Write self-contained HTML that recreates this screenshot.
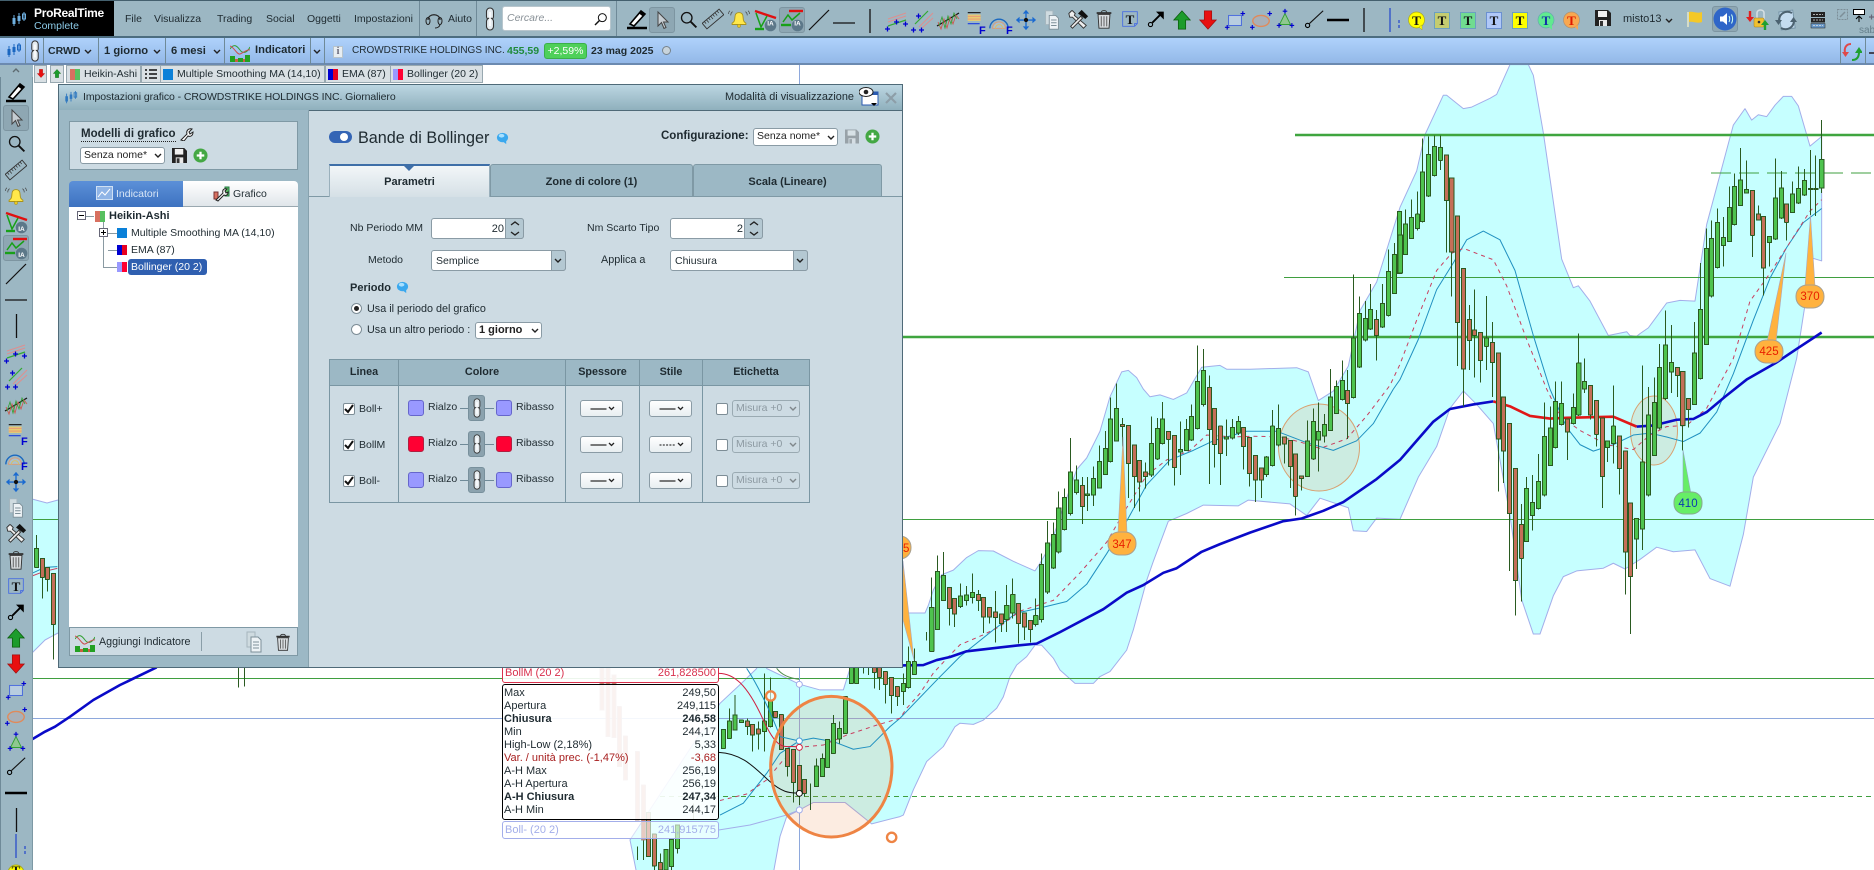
<!DOCTYPE html>
<html lang="it"><head><meta charset="utf-8"><title>ProRealTime</title>
<style>
html,body{margin:0;padding:0;width:1874px;height:870px;overflow:hidden;background:#fff}
body{position:relative;font-family:"Liberation Sans",sans-serif;font-size:10.5px;color:#222}
div,svg{position:absolute}
.t{position:absolute;white-space:nowrap;line-height:14px;font-size:10.5px;color:#1e2a30}
.b{font-weight:bold}
.c{text-align:center}
.sel{background:#fff;border:1px solid #8a9ba5;border-radius:3px;box-sizing:border-box;line-height:15px;white-space:nowrap;padding-left:3px;font-size:10.5px}
.sw{width:16px;height:16px;box-sizing:border-box;border-radius:3px;border:1px solid #6666cc;background:#9999ff}
.sr{border-color:#b02040;background:#ff0033}
.cb{width:12px;height:12px;background:#fff;border:1px solid #7d8d96;border-radius:2px;box-sizing:border-box}
.sl{background:linear-gradient(#fff,#e8eef1);border:1px solid #8a9ba5;border-radius:3px;box-sizing:border-box;height:17px}
.tab{background:#d9e0e4;border:1px solid #98a8b0;box-sizing:border-box;height:18px;top:65px}
.lnk{width:17px;height:26px;background:#8ba2ae;border-radius:3px;border:1px solid #78909c;box-sizing:border-box}
svg.ch path,svg.ch polyline{vector-effect:non-scaling-stroke;stroke-linejoin:round}
.k{shape-rendering:crispEdges}
.tip{font-size:11px;line-height:13px}
.dv{width:1px;background:#6f8a98}
</style></head><body>

<svg width="0" height="0" style="left:0;top:0">
<defs>
<symbol id="pen" viewBox="0 0 24 24"><path d="M5 17L16 4l4 3L9 19z" fill="#fff" stroke="#000" stroke-width="1.6"/><path d="M16 4l4 3-2 2.5-4-3z" fill="#000"/><path d="M2 21h20" stroke="#000" stroke-width="2.4"/></symbol>
<symbol id="cur" viewBox="0 0 24 24"><path d="M8 4v14l3.5-3.5 2.5 6 2-1-2.5-5.5H18z" fill="#c6cdd2" stroke="#444"/></symbol>
<symbol id="mag" viewBox="0 0 24 24"><circle cx="10" cy="10" r="6" fill="none" stroke="#111" stroke-width="1.5"/><path d="M14.5 14.5L21 21" stroke="#111" stroke-width="2.2"/></symbol>
<symbol id="rul" viewBox="0 0 24 24"><g transform="rotate(-40 12 12)"><rect x="0" y="8" width="24" height="8" fill="none" stroke="#333"/><path d="M3 8v3M6 8v4M9 8v3M12 8v4M15 8v3M18 8v4M21 8v3" stroke="#333" stroke-width=".8"/></g></symbol>
<symbol id="bel" viewBox="0 0 24 24"><path d="M12 5c-4 0-4.5 3-4.5 5.5 0 3-1 5-3 6V18h15v-1.500c-2-1-3-3-3-6C16.500 8 16 5 12 5z" fill="#ffe84a" stroke="#a8921c"/><circle cx="12" cy="19.500" r="1.700" fill="#e8c820" stroke="#a8921c" stroke-width=".6"/><path d="M5 4C3.500 5 3 6.500 3 8M2 3C1 4 .5 5 .5 6.500M19 4c1.500 1 2 2.500 2 4M22 3c1 1 1.500 2 1.500 3.500" stroke="#444" fill="none" stroke-width=".8"/></symbol>
<symbol id="ia1" viewBox="0 0 24 24"><path d="M2 3L23 10" stroke="#e01010" stroke-width="2.400"/><path d="M3 5L8 19L14 8" stroke="#18a018" stroke-width="1.500" fill="none"/><path d="M2 21h9" stroke="#18a018" stroke-width="2.400"/><circle cx="17.500" cy="17.500" r="5.800" fill="#5c7889"/></symbol>
<symbol id="ia2" viewBox="0 0 24 24"><path d="M9 3H23" stroke="#e01010" stroke-width="2.400"/><path d="M3 14L8 7L12 12L20 5" stroke="#18a018" stroke-width="1.500" fill="none"/><path d="M1 17h10" stroke="#18a018" stroke-width="2.400"/><circle cx="17.500" cy="17.500" r="5.800" fill="#5c7889"/></symbol>
<symbol id="lin" viewBox="0 0 24 24"><path d="M2 22L22 2" stroke="#111" stroke-width="1.200"/></symbol>
<symbol id="hln" viewBox="0 0 24 24"><path d="M1 12h22" stroke="#111" stroke-width="1.300"/></symbol>
<symbol id="vln" viewBox="0 0 24 24"><path d="M12 0v24" stroke="#111" stroke-width="1.300"/></symbol>
<symbol id="chA" viewBox="0 0 24 24"><path d="M3 10L21 4M3 13L21 7" stroke="#dd9090" stroke-width="1.100"/><path d="M3 17L21 11" stroke="#33aa33" stroke-width="1.200"/><path d="M0 20h5M2.500 17.500v5M9 13h5M11.500 10.500v5M18 15h5M20.500 12.500v5" stroke="#0000d0" stroke-width="1.300"/></symbol>
<symbol id="chB" viewBox="0 0 24 24"><path d="M9 18L23 4M12 19L23 9" stroke="#dd9090" stroke-width="1.100"/><path d="M5 15L18 2" stroke="#33aa33" stroke-width="1.200"/><path d="M6 7h5M8.500 4.500v5M1 21h5M3.500 18.500v5M9 21h5M11.500 18.500v5" stroke="#0000d0" stroke-width="1.300"/></symbol>
<symbol id="chC" viewBox="0 0 24 24"><path d="M1 18L23 5" stroke="#111" stroke-width="1.300"/><path d="M2 14l3 7 3-10 3 9 3-11 3 7 3-9 3 4" stroke="#cc5a50" fill="none" stroke-width=".9"/><path d="M3 18l3-9 3 11 3-12 3 8 3-11 3 6" stroke="#30a030" fill="none" stroke-width=".8"/></symbol>
<symbol id="fib" viewBox="0 0 24 24"><path d="M3 4h14" stroke="#111" stroke-width="1.200"/><rect x="3" y="6" width="14" height="7" fill="#e8cc70"/><path d="M3 8h14M3 11h14" stroke="#e8907a"/><path d="M3 16h13" stroke="#2244dd" stroke-width="1.300"/></symbol>
<symbol id="arc" viewBox="0 0 24 24"><path d="M2 20a10 10 0 0 1 20 0" stroke="#1a68c0" stroke-width="1.500" fill="none"/><path d="M5 20a7 7 0 0 1 14 0z" fill="#a8c0d0" stroke="#e09a70"/><path d="M8 20a4 4 0 0 1 8 0" stroke="#d8c060" fill="none"/></symbol>
<symbol id="mov" viewBox="0 0 24 24"><path d="M12 1l3.500 4h-7zM12 23l-3.500-4h7zM1 12l4-3.500v7zM23 12l-4 3.500v-7z" fill="#1a6ad0"/><path d="M12 5v14M5 12h14" stroke="#1a6ad0" stroke-width="1.500"/><circle cx="12" cy="12" r="2.300" fill="#111"/></symbol>
<symbol id="cop" viewBox="0 0 24 24"><path d="M5 2h8v15H5z" fill="#cfdbe0" stroke="#a6b6be"/><path d="M9 7h7l3 3v12H9z" fill="#eef3f6" stroke="#7d8f98"/><path d="M11 12h6M11 15h6M11 18h6" stroke="#7d8f98"/></symbol>
<symbol id="tls" viewBox="0 0 24 24"><path d="M2 6l3-3 1 0 3 3-1 2L21 19l-3 3L6 10 3 10z" fill="#eee" stroke="#333"/><path d="M4 20L15 9l2 2L6 22z" fill="#eee" stroke="#333"/><path d="M12 6l4-4 7 7-3 3z" fill="#111"/></symbol>
<symbol id="trs" viewBox="0 0 24 24"><path d="M5.500 7h13l-1 15h-11z" fill="#d8dcdf" stroke="#333"/><path d="M4 5.500h16" stroke="#333" stroke-width="2"/><path d="M9 9v11M12 9v11M15 9v11" stroke="#555"/><path d="M9 5c0-3 6-3 6 0" stroke="#333" fill="none"/></symbol>
<symbol id="nte" viewBox="0 0 24 24"><path d="M4 4h16v13l-3 3H4z" fill="none" stroke="#4a6fe0"/><path d="M20 17h-3v3" fill="none" stroke="#4a6fe0"/></symbol>
<symbol id="arw" viewBox="0 0 24 24"><circle cx="6" cy="18" r="2.300" fill="none" stroke="#000" stroke-width="1.200"/><path d="M8 16L17 7" stroke="#000" stroke-width="2"/><path d="M12 4h8.500v8.500z" fill="#000"/></symbol>
<symbol id="up" viewBox="0 0 24 24"><path d="M12 2L21 12h-5v10H8V12H3z" fill="#1c9c2c" stroke="#0a5a0a" stroke-width=".8"/></symbol>
<symbol id="dn" viewBox="0 0 24 24"><path d="M12 22L21 12h-5V2H8v10H3z" fill="#e81010" stroke="#a01010" stroke-width=".8"/></symbol>
<symbol id="rct" viewBox="0 0 24 24"><rect x="5" y="7" width="14" height="11" fill="#b8cde0" stroke="#4466dd"/><path d="M1 20h5M3.500 17.500v5M18 5h5M20.500 2.500v5" stroke="#0000d0" stroke-width="1.300"/></symbol>
<symbol id="ell" viewBox="0 0 24 24"><ellipse cx="12" cy="13" rx="9" ry="6" fill="#a8b0b8" stroke="#e08a5a" stroke-width="1.500"/><path d="M0 20h5M2.500 17.500v5M19 5h5M21.500 2.500v5" stroke="#0000d0" stroke-width="1.300"/></symbol>
<symbol id="tri" viewBox="0 0 24 24"><path d="M12 6L6 18h12z" fill="#8fc88f" stroke="#33a033"/><path d="M9.500 3.500h5M12 1v5M3 19h5M5.500 16.500v5M17 19h5M19.500 16.500v5" stroke="#0000d0" stroke-width="1.300"/></symbol>
<symbol id="sln" viewBox="0 0 24 24"><circle cx="5" cy="19" r="2.300" fill="none" stroke="#000" stroke-width="1.200"/><path d="M7 17L22 3" stroke="#111" stroke-width="1.200"/></symbol>
<symbol id="thk" viewBox="0 0 24 24"><path d="M1 12h22" stroke="#000" stroke-width="2.400"/></symbol>
<symbol id="vbl" viewBox="0 0 24 24"><path d="M10 0v24" stroke="#2244cc" stroke-width="1.200"/><path d="M19 12v3M19 17v3" stroke="#2244cc" stroke-width="1.200"/></symbol>
<symbol id="cdl" viewBox="0 0 16 16"><path d="M3 3v11M8 1v11M13 0v9" stroke="currentColor" stroke-width="1"/><rect x="1.500" y="6" width="3" height="6" fill="currentColor"/><rect x="6.500" y="4" width="3" height="5" fill="currentColor"/><rect x="11.500" y="2" width="3" height="5" fill="none" stroke="currentColor"/></symbol>
<symbol id="lk" viewBox="0 0 12 24"><rect x="2.500" y="1" width="7" height="12" rx="3.500" fill="#e4ebef" stroke="#333" stroke-width="1.100"/><rect x="2.500" y="11" width="7" height="12" rx="3.500" fill="#e4ebef" stroke="#333" stroke-width="1.100"/><path d="M6 5v14" stroke="#fff" stroke-width="1.600"/></symbol>
<symbol id="sv" viewBox="0 0 16 16"><path d="M0 0h13l3 3v13H0z" fill="#222"/><rect x="3" y="1" width="9" height="6" fill="#f0f0f0"/><rect x="4" y="10" width="8" height="6" fill="#e8e8e8"/><rect x="5" y="11" width="3" height="5" fill="#333"/></symbol>
<symbol id="pls" viewBox="0 0 16 16"><circle cx="8" cy="8" r="7.500" fill="#44a844"/><path d="M8 4v8M4 8h8" stroke="#fff" stroke-width="2.400"/></symbol>
<symbol id="bub" viewBox="0 0 14 14"><ellipse cx="7" cy="6" rx="6" ry="5" fill="#3aa8ee"/><ellipse cx="6" cy="4" rx="3" ry="2" fill="#a8e0ff"/><path d="M7 10l4-1v4z" fill="#3aa8ee"/></symbol>
<symbol id="cv" viewBox="0 0 8 5"><path d="M1 1l3 3 3-3" fill="none" stroke="#222" stroke-width="1.400"/></symbol>
<symbol id="spx" viewBox="0 0 26 10"><path d="M2 5h16" stroke="#111" stroke-width="1.100"/><path d="M20.500 3l2.500 2.500L25.500 3" fill="none" stroke="#222" stroke-width="1.300"/></symbol>
<symbol id="spd" viewBox="0 0 26 10"><path d="M2 5h16" stroke="#111" stroke-width="1.100" stroke-dasharray="2 1.300"/><path d="M20.500 3l2.500 2.500L25.500 3" fill="none" stroke="#222" stroke-width="1.300"/></symbol>
<symbol id="ind" viewBox="0 0 20 20"><path d="M0 7c4-6 7-3 10 1s7 3 10-3" stroke="#33a033" stroke-width="1" fill="none"/><path d="M0 4c4 1 7 9 10 8s7-5 10-4" stroke="#cc5050" stroke-width="1" fill="none"/><path d="M0 14h5v6H0zM8 16h5v4H8zM15 13h5v7h-5z" fill="#22a022"/><path d="M5 17h3v3H5zM13 17h2v3h-2z" fill="#c86040"/></symbol>
</defs>
</svg>

<!-- CHART -->
<svg class="ch" width="1874" height="870" viewBox="0 0 1874 870" style="left:0;top:0">
<rect width="1874" height="870" fill="#fff"/>
<path d="M32 499L47 503 58 500V633L45 640 32 653z" fill="#c6ffff"/>
<path d="M32 499L47 503 58 500M58 633L45 640 32 653" fill="none" stroke="#a3aeea"/>

<g transform="translate(900 60) scale(.33333 .3827)">
<path fill="#c6ffff" stroke="#a3aeea" stroke-width="1" d="M-810 2038L-540 1681-470 1624-430 1590-420 1400-400 1400-400 1590-302 1631-240 1646-170 1646-150 1590-100 1400 8 1445 40 1445 75 1445 85 1425 100 1385 125 1345 160 1333 200 1300 235 1282 280 1283 340 1310 405 1335 420 1315 450 1270 530 1070 560 1040 600 970 630 880 665 815 685 811 710 830 730 860 750 880 780 875 820 887 860 870 880 840 905 803 960 798 980 808 1050 808 1190 804 1225 815 1255 890 1300 865 1345 800 1380 655 1430 580 1500 385 1550 290 1575 195 1630 92 1640 92 1690 127 1715 123 1770 100 1790 90 1830 12 1885 12 1900 40 1930 190 1985 520 2020 595 2035 590 2070 630 2125 720 2180 710 2190 720 2210 722 2220 715 2245 700 2300 635 2340 628 2385 630 2420 430 2500 170 2535 127 2555 157 2575 143 2600 148 2625 118 2650 95 2675 95 2695 120 2730 225 2765 200 2765 525 2735 517 2715 640 2690 780 2640 950 2560 1090 2530 1240 2490 1375 2430 1355 2385 1280 2320 1285 2270 1273 2220 1305 2175 1330 2140 1315 2110 1328 2030 1335 1990 1350 1960 1400 1920 1500 1900 1500 1865 1410 1830 1190 1780 950 1730 900 1690 865 1650 910 1610 1010 1555 1090 1500 1200 1430 1197 1400 1232 1360 1230 1345 1170 1260 1145 1220 1190 1170 1160 1045 1150 1015 1165 910 1163 860 1185 805 1205 760 1310 740 1360 700 1489 680 1542 630 1598 600 1611 580 1629 525 1629 480 1594 460 1563 425 1529 405 1529 380 1559 350 1581 330 1611 310 1664 290 1694 250 1725 220 1736 180 1733 165 1742 130 1794 80 1833 40 1907 10 1973 0 1977-85 1996-165 1940-260 1940-302 1960-340 1977-360 2029-380 2125-790 2125z"/>
</g>

<!-- horizontals -->
<path d="M1295 135H1874" stroke="#3fa53f" stroke-width="2.500"/>
<path d="M1284 277.500H1874" stroke="#3f9f3f"/>
<path d="M903 337H1874" stroke="#3fa53f" stroke-width="2.500"/>
<path d="M32 519.500H1874" stroke="#3f9f3f"/>
<path d="M32 678.500H1874" stroke="#3f9f3f"/>
<path d="M32 718.500H1874" stroke="#8ea8dc" stroke-width="1"/>
<path d="M660 796.500H1874" stroke="#3f9f3f" stroke-dasharray="5 4"/>
<path d="M1711 173H1871" stroke="#3f9f3f" stroke-dasharray="20 8"/>
<path d="M799.500 65V870" stroke="#8ea8dc"/>

<!-- ellipses under candles -->
<ellipse cx="831" cy="767" rx="61" ry="70.500" fill="rgba(240,140,80,.17)" stroke="none"/>
<ellipse cx="1319" cy="447.500" rx="40.500" ry="43.500" fill="rgba(240,140,80,.17)" stroke="#d8a070"/>
<ellipse cx="1654" cy="430.500" rx="23.500" ry="34.500" fill="rgba(240,140,80,.17)" stroke="#d8a070"/>

<!-- lines: frame -->
<g transform="translate(900 60) scale(.33333 .3827)" fill="none">
<path stroke="#2090c0" stroke-width="1" d="M-540 1973L-470 1942-400 1864-360 1812-302 1779-260 1772-200 1781-140 1801-90 1794-30 1742 0 1720 115 1616 180 1559 280 1489 350 1445 420 1432 500 1415 560 1370 620 1290 680 1205 740 1110 810 1045 880 1020 940 995 1040 970 1130 970 1220 1000 1300 1020 1370 995 1420 950 1480 860 1500 835 1555 730 1610 600 1660 530 1700 470 1750 447 1800 470 1845 550 1900 720 1950 860 2000 960 2040 1005 2080 1022 2140 1005 2200 980 2250 975 2300 985 2350 997 2400 975 2450 920 2500 820 2560 680 2610 570 2660 490 2710 425 2765 388"/>
<path stroke="#c84060" stroke-width="1" stroke-dasharray="4 4" d="M-540 1935L-460 1918-400 1881-350 1829-302 1796-230 1790-160 1764-70 1738 0 1720 20 1694 60 1655 100 1602 150 1555 180 1528 250 1502 300 1480 360 1440 460 1412 540 1340 620 1260 680 1170 740 1085 800 1045 870 1020 920 980 1000 985 1060 983 1140 985 1200 998 1260 1015 1340 990 1400 930 1470 850 1500 795 1550 680 1610 550 1655 505 1690 492 1780 522 1820 590 1880 730 1940 860 1980 930 2040 968 2120 1005 2200 1018 2250 980 2300 958 2360 955 2420 910 2500 780 2550 630 2600 570 2660 490 2730 395 2765 365"/>
<path stroke="#0a0ac8" stroke-width="2.600" d="M0 1582L70 1581 110 1568 150 1560 200 1545 300 1535 350 1530 410 1525 480 1495 610 1435 680 1392 730 1372 790 1340 830 1328 905 1285 960 1265 1050 1235 1150 1205 1205 1198 1270 1178 1330 1155 1430 1095 1500 1045 1550 995 1600 945 1650 912 1720 900 1780 892"/>
<path stroke="#e01818" stroke-width="2.600" d="M1780 892L1830 905 1890 930 1950 937 2000 935 2140 932 2210 958"/>
<path stroke="#0a0ac8" stroke-width="2.600" d="M2210 958L2260 955 2330 940 2380 938 2420 920 2475 880 2540 835 2630 790 2690 755 2765 712"/>
</g>

<!-- left sliver -->
<g transform="translate(0 470) scale(.33333)">
<path fill="none" stroke="#2090c0" d="M96 310L135 292 172 290"/>
<path fill="none" stroke="#c84060" stroke-dasharray="9 9" d="M96 318L130 305 172 295"/>
<path fill="none" stroke="#0a0ac8" stroke-width="2.600" d="M96 808L135 785 165 770 210 740 280 690 360 645 470 592"/>
<path class="k" fill="none" stroke="#2a5a20" d="M110 195V292M127 265V386M142 292V365M160 310V568M175 45V590M716 590V652M733 590V650"/>
<path class="k" fill="#4ec34e" stroke="#2a5a20" d="M104 235h12V292h-12z"/>
<path class="k" fill="#c46f58" stroke="#2a5a20" d="M121 265h12V322h-12zM136 292h12V328h-12zM154 310h12V463h-12z"/>
</g>

<!-- candles z10 -->
<g class="k" transform="translate(900 60) scale(.33333 .3827)">
<path fill="none" stroke="#2a5a20" d="M79 1495V1517M95 1352V1545M112 1295V1490M130 1285V1412M148 1378V1478M163 1407V1482M181 1368V1432M199 1375V1425M217 1342V1420M235 1385V1440M250 1405V1497M268 1430V1472M286 1388V1522M304 1448V1495M320 1372V1495M338 1355V1460M355 1420V1525M373 1445V1515M391 1465V1522M407 1407V1480M424 1290V1470M442 1205V1395M460 1208V1330M476 1128V1290M493 1120V1230M511 988V1190M529 1060V1135M547 1090V1212M562 1090V1178M580 1062V1165M598 1007V1120M616 970V1085M631 882V1052M649 845V995M667 935V1010M685 955V1145M703 1006V1170M718 1047V1180M736 1052V1120M754 932V1090M772 935V1045M787 893V1005M805 971V1060M823 981V1112M841 945V1085M859 938V1020M874 900V995M892 746V965M910 755V905M928 825V1108M943 910V1065M961 957V1110M979 940V1035M997 938V992M1015 930V980M1030 960V1070M1048 986V1115M1066 1034V1155M1084 1066V1145M1099 1035V1090M1117 915V1062M1135 900V1010M1153 985V1055M1171 994V1118M1186 1029V1190M1204 1087V1125M1222 942V1090M1240 910V1045M1255 895V1075M1273 925V1000M1291 808V970M1309 838V925M1327 785V890M1342 810V990M1360 560V885M1378 618V805M1396 630V735M1411 585V705M1429 653V785M1447 585V700M1465 495V670M1483 478V612"/>
<path fill="#4ec34e" stroke="#2a5a20" d="M89 1430h13V1545h-13zM106 1337h13V1488h-13zM124 1347h13V1412h-13zM175 1400h13V1428h-13zM193 1398h13V1412h-13zM211 1392h13V1404h-13zM314 1425h13V1462h-13zM332 1397h13V1445h-13zM401 1452h13V1475h-13zM418 1318h13V1462h-13zM436 1262h13V1390h-13zM454 1240h13V1327h-13zM470 1170h13V1285h-13zM487 1143h13V1227h-13zM505 1076h13V1185h-13zM523 1097h13V1130h-13zM556 1134h13V1138h-13zM574 1093h13V1137h-13zM592 1049h13V1118h-13zM610 1015h13V1083h-13zM625 938h13V1049h-13zM643 910h13V995h-13zM748 1002h13V1085h-13zM766 963h13V1042h-13zM781 938h13V1002h-13zM835 1018h13V1024h-13zM853 965h13V1020h-13zM868 932h13V993h-13zM886 840h13V963h-13zM904 811h13V900h-13zM973 985h13V990h-13zM991 960h13V988h-13zM1009 944h13V975h-13zM1093 1037h13V1083h-13zM1111 957h13V1060h-13zM1129 963h13V1006h-13zM1216 995h13V1088h-13zM1234 944h13V1042h-13zM1249 971h13V993h-13zM1267 952h13V982h-13zM1285 880h13V968h-13zM1303 853h13V924h-13zM1321 837h13V887h-13zM1354 727h13V882h-13zM1372 662h13V802h-13zM1390 675h13V732h-13zM1405 652h13V703h-13zM1441 636h13V698h-13zM1459 552h13V667h-13zM1477 508h13V610h-13zM1492 396h13V558h-13z"/>
<path fill="#c46f58" stroke="#2a5a20" d="M142 1378h13V1433h-13zM157 1407h13V1448h-13zM229 1397h13V1412h-13zM244 1405h13V1455h-13zM262 1430h13V1455h-13zM280 1442h13V1457h-13zM298 1448h13V1472h-13zM349 1420h13V1472h-13zM367 1445h13V1482h-13zM385 1465h13V1488h-13zM541 1112h13V1167h-13zM661 952h13V958h-13zM679 955h13V1055h-13zM697 1006h13V1088h-13zM712 1047h13V1103h-13zM730 1076h13V1088h-13zM799 971h13V991h-13zM817 981h13V1065h-13zM922 856h13V965h-13zM937 910h13V1005h-13zM955 957h13V1028h-13zM1024 960h13V1010h-13zM1042 986h13V1080h-13zM1060 1034h13V1098h-13zM1078 1066h13V1098h-13zM1147 985h13V1004h-13zM1165 994h13V1062h-13zM1180 1029h13V1140h-13zM1198 1087h13V1093h-13zM1336 864h13V897h-13zM1423 678h13V720h-13z"/>
</g>
<!-- candles z11 -->
<g class="k" transform="translate(1400 60) scale(.33333 .3827)">
<path fill="none" stroke="#2a5a20" d="M16 390V510M34 365V468M52 343V445M67 205V425M85 200V358M103 197V305M121 197V288M139 248V503M155 308V618M172 407V800M190 545V905M208 640V810M223 600V830M241 712V843M259 617V810M277 685V880M295 765V1128M310 880V1105M328 950V1335M346 1068V1452M364 1160V1415M379 1090V1260M397 1085V1230M415 1030V1175M433 895V1140M451 905V1060M466 840V1015M484 840V955M502 938V1045M520 872V952M536 715V930M553 780V870M571 850V940M589 890V1010M607 935V1170M622 995V1050M640 850V1055M658 982V1135M676 1022V1397M691 1157V1500M709 1198V1330M727 798V1280M745 855V1140M763 830V1035M778 742V965M796 655V888M814 693V870M832 803V880M848 814V1020M865 884V960M883 685V902M901 530V835M919 440V745M934 420V620M952 388V545M970 410V540M988 330V476M1003 297V432M1021 230V382M1039 262V348M1057 341V515M1075 380V420M1090 409V615M1108 461V540M1126 258V470M1144 290V415M1159 376V472M1177 318V400M1195 278V376M1213 285V355M1231 235V405M1247 250V408M1265 157V347"/>
<path fill="#4ec34e" stroke="#2a5a20" d="M-6 457h13V557h-13zM10 428h13V508h-13zM28 412h13V467h-13zM46 403h13V440h-13zM61 293h13V422h-13zM79 247h13V356h-13zM97 226h13V302h-13zM115 228h13V262h-13zM253 727h13V748h-13zM373 1120h13V1258h-13zM391 1156h13V1190h-13zM409 1101h13V1172h-13zM427 984h13V1137h-13zM445 962h13V1060h-13zM460 892h13V1012h-13zM478 897h13V952h-13zM514 908h13V950h-13zM530 792h13V927h-13zM547 840h13V860h-13zM616 995h13V1012h-13zM634 957h13V1002h-13zM703 1198h13V1252h-13zM721 1050h13V1225h-13zM739 928h13V1137h-13zM757 895h13V1033h-13zM772 804h13V962h-13zM790 745h13V885h-13zM808 790h13V815h-13zM877 765h13V900h-13zM895 652h13V832h-13zM913 492h13V743h-13zM928 466h13V617h-13zM946 424h13V542h-13zM964 464h13V485h-13zM982 385h13V474h-13zM997 330h13V430h-13zM1015 313h13V380h-13zM1033 338h13V347h-13zM1102 461h13V477h-13zM1120 360h13V468h-13zM1138 334h13V413h-13zM1171 350h13V398h-13zM1189 336h13V374h-13zM1207 315h13V353h-13zM1259 260h13V335h-13z"/>
<path fill="#c46f58" stroke="#2a5a20" d="M133 248h13V367h-13zM149 308h13V502h-13zM166 407h13V686h-13zM184 545h13V808h-13zM202 678h13V733h-13zM217 705h13V720h-13zM235 712h13V785h-13zM271 738h13V790h-13zM289 765h13V990h-13zM304 880h13V1022h-13zM322 950h13V1185h-13zM340 1068h13V1360h-13zM358 1214h13V1302h-13zM496 938h13V972h-13zM565 850h13V928h-13zM583 890h13V978h-13zM601 935h13V1088h-13zM652 982h13V1067h-13zM670 1022h13V1286h-13zM685 1157h13V1350h-13zM826 803h13V825h-13zM842 814h13V955h-13zM859 884h13V913h-13zM1051 341h13V458h-13zM1069 402h13V418h-13zM1084 409h13V543h-13zM1153 376h13V424h-13zM1225 336h13V338h-13zM1241 336h13V338h-13z"/>
</g>
<!-- candles z9 -->
<g transform="translate(480 640) scale(.33333)">
<path class="k" fill="none" stroke="#2a5a20" d="M748 205V295M765 165V272M802 235V285M818 253V335M835 245V328M853 100V335M871 113V262M904 224V330M922 325V410M940 328V488M958 376V495M973 418V470M991 430V510M1009 355V440M1027 340V410M1043 298V382M1060 225V342M1078 245V310M1096 170V282M1150 60V100M1165 60V105M1183 60V145M1198 60V150M1216 95V190M1234 112V220M1252 140V198M1270 100V195M1285 20V145M1303 25V105M473 620V660M490 600V660M523 585V690M541 640V690M558 628V690M575 598V690M593 555V640M640 490V540"/>
<path class="k" fill="#4ec34e" stroke="#2a5a20" d="M724 268h12V325h-12zM742 243h12V295h-12zM759 225h12V270h-12zM778 240h12V248h-12zM847 243h12V275h-12zM865 183h12V260h-12zM1003 378h12V440h-12zM1021 355h12V410h-12zM1037 298h12V382h-12zM1054 250h12V340h-12zM1072 265h12V297h-12zM1090 170h12V280h-12zM1108 60h12V130h-12zM1124 60h12V130h-12zM1264 130h12V155h-12zM1279 65h12V143h-12zM1297 65h12V103h-12zM552 628h12V690h-12zM569 598h12V680h-12zM587 555h12V625h-12z"/>
<path class="k" fill="#c46f58" stroke="#2a5a20" d="M796 243h12V260h-12zM812 253h12V285h-12zM829 267h12V282h-12zM880 214h12V232h-12zM898 224h12V328h-12zM916 325h12V380h-12zM934 328h12V428h-12zM952 376h12V460h-12zM967 418h12V460h-12zM1177 60h12V97h-12zM1192 60h12V112h-12zM1210 95h12V133h-12zM1228 112h12V167h-12zM1246 140h12V170h-12zM500 517h12V650h-12zM517 582h12V678h-12zM535 668h12V690h-12z"/>
<path class="k" fill="#c46f58" stroke="#a88" opacity=".9" d="M360 60h12V210h-12zM378 60h12V290h-12zM396 105h12V293h-12zM412 200h12V380h-12zM430 288h12V420h-12zM466 335h12V540h-12zM484 435h12V600h-12z"/>
<path fill="none" stroke="#d02040" d="M716 100C760 100 800 130 850 240S920 310 958 322"/>
<path fill="none" stroke="#111" d="M716 337C790 340 830 390 870 425S930 458 958 460"/>
<path fill="none" stroke="#2090c0" d="M800 85C830 130 870 210 900 290L958 303"/>
<path fill="none" stroke="#a3aeea" d="M716 570L810 555 920 525 958 510"/>
<path fill="none" stroke="#509050" d="M890 85C905 105 930 115 958 118"/>
<ellipse cx="1054" cy="380" rx="182" ry="211" fill="none" stroke="#ee8444" stroke-width="9"/>
<circle cx="872" cy="168" r="14" fill="#fff" fill-opacity=".6" stroke="#ee8444" stroke-width="7"/>
<circle cx="1235" cy="592" r="14" fill="#fff" stroke="#ee8444" stroke-width="7"/>
<circle cx="958" cy="133" r="9" fill="#fff" stroke="#a3aeea" stroke-width="3"/>
<circle cx="958" cy="303" r="9" fill="#fff" stroke="#4aa0d8" stroke-width="3"/>
<circle cx="958" cy="322" r="9" fill="#fff" stroke="#d02040" stroke-width="3"/>
<circle cx="958" cy="460" r="9" fill="#fff" stroke="#111" stroke-width="3"/>
<circle cx="958" cy="510" r="9" fill="#fff" stroke="#a3aeea" stroke-width="3"/>
</g>

<!-- labels -->
<path d="M1123 437L1118 532H1127z" fill="#ffb23e" stroke="#a8a8c0" stroke-width=".6"/>
<rect x="1108" y="532" width="28" height="23" rx="11" fill="#ffb23e" stroke="#a8a090"/>
<text x="1122" y="548" text-anchor="middle" font-size="11.500" fill="#e82000" font-family="Liberation Sans">347</text>
<path d="M903 561L914 660 903 620z" fill="#ffb23e" stroke="#a8a8c0" stroke-width=".6"/>
<rect x="885" y="536" width="26" height="23" rx="11" fill="#ffb23e" stroke="#a8a090"/>
<text x="903" y="552" font-size="11.500" fill="#e82000" font-family="Liberation Sans">5</text>
<path d="M1810.500 215L1805 286H1815z" fill="#ffb23e" stroke="#a8a8c0" stroke-width=".6"/>
<rect x="1796" y="285" width="28" height="23" rx="11" fill="#ffb23e" stroke="#a8a090"/>
<text x="1810" y="300" text-anchor="middle" font-size="11.500" fill="#e82000" font-family="Liberation Sans">370</text>
<path d="M1786 253L1767 342H1776z" fill="#ffb23e" stroke="#a8a8c0" stroke-width=".6"/>
<rect x="1755" y="340" width="28" height="23" rx="11" fill="#ffb23e" stroke="#a8a090"/>
<text x="1769" y="355" text-anchor="middle" font-size="11.500" fill="#e82000" font-family="Liberation Sans">425</text>
<path d="M1683 450L1683 494H1691z" fill="#66ee66" stroke="#90a8c0" stroke-width=".6"/>
<rect x="1674" y="492" width="28" height="22" rx="10" fill="#66ee66" stroke="#88a890"/>
<text x="1688" y="507" text-anchor="middle" font-size="11.500" fill="#0a3ab0" font-family="Liberation Sans">410</text>
</svg>

<!-- TOOLTIP -->
<div style="left:502px;top:660px;width:217px;height:23px;box-sizing:border-box;border:1px solid #d8304c;border-radius:3px;background:rgba(255,255,255,.9)"></div>
<div class="t tip" style="left:505px;top:667px;color:#d8304c">BollM (20 2)</div>
<div class="t tip" style="right:1158px;top:667px;color:#d8304c">261,828500</div>
<div style="left:502px;top:684px;width:217px;height:136px;box-sizing:border-box;border:1px solid #000;border-radius:3px;background:rgba(255,255,255,.9)"></div>
<div class="t tip" style="left:504px;top:687px">Max</div><div class="t tip" style="right:1158px;top:687px">249,50</div>
<div class="t tip" style="left:504px;top:700px">Apertura</div><div class="t tip" style="right:1158px;top:700px">249,115</div>
<div class="t tip b" style="left:504px;top:713px">Chiusura</div><div class="t tip b" style="right:1158px;top:713px">246,58</div>
<div class="t tip" style="left:504px;top:726px">Min</div><div class="t tip" style="right:1158px;top:726px">244,17</div>
<div class="t tip" style="left:504px;top:739px">High-Low (2,18%)</div><div class="t tip" style="right:1158px;top:739px">5,33</div>
<div class="t tip" style="left:504px;top:752px;color:#a82020">Var. / unità prec. (-1,47%)</div><div class="t tip" style="right:1158px;top:752px;color:#a82020">-3,68</div>
<div class="t tip" style="left:504px;top:765px">A-H Max</div><div class="t tip" style="right:1158px;top:765px">256,19</div>
<div class="t tip" style="left:504px;top:778px">A-H Apertura</div><div class="t tip" style="right:1158px;top:778px">256,19</div>
<div class="t tip b" style="left:504px;top:791px">A-H Chiusura</div><div class="t tip b" style="right:1158px;top:791px">247,34</div>
<div class="t tip" style="left:504px;top:804px">A-H Min</div><div class="t tip" style="right:1158px;top:804px">244,17</div>
<div style="left:502px;top:821px;width:217px;height:18px;box-sizing:border-box;border:1px solid #a3aeea;border-radius:3px;background:rgba(255,255,255,.6)"></div>
<div class="t tip" style="left:505px;top:824px;color:#a3aeea">Boll- (20 2)</div>
<div class="t tip" style="right:1158px;top:824px;color:#a3aeea">241,915775</div>

<!-- TOP TOOLBAR -->
<div style="left:0;top:0;width:1874px;height:38px;background:#9cb7c3;border-top:1px solid #44606e;border-bottom:2px solid #4c6d80;box-sizing:border-box"></div>
<div style="left:0;top:1px;width:114px;height:35px;background:#000"></div>
<svg width="16" height="16" style="left:11px;top:12px;color:#6fb0e0"><use href="#cdl"/></svg>
<div class="t" style="left:34px;top:6px;font-size:12px;color:#fff;font-weight:bold;letter-spacing:-.3px">ProRealTime</div>
<div class="t" style="left:34px;top:19px;font-size:10.5px;color:#8ccbe8">Complete</div>
<div class="t" style="left:125px;top:12px">File</div>
<div class="t" style="left:154px;top:12px">Visualizza</div>
<div class="t" style="left:217px;top:12px">Trading</div>
<div class="t" style="left:266px;top:12px">Social</div>
<div class="t" style="left:307px;top:12px">Oggetti</div>
<div class="t" style="left:354px;top:12px">Impostazioni</div>
<div class="dv" style="left:419px;top:1px;height:35px"></div>
<svg width="18" height="20" viewBox="0 0 18 20" style="left:425px;top:10px"><path d="M3 10C3 3 15 3 15 10" fill="none" stroke="#222" stroke-width="1.200"/><ellipse cx="3" cy="11" rx="2" ry="3.500" fill="none" stroke="#222"/><ellipse cx="15" cy="11" rx="2" ry="3.500" fill="none" stroke="#222"/><path d="M15 14c0 3-3 4-5 4" fill="none" stroke="#222"/></svg>
<div class="t" style="left:448px;top:12px">Aiuto</div>
<div class="dv" style="left:476px;top:1px;height:35px"></div>
<svg width="12" height="24" style="left:484px;top:7px"><use href="#lk"/></svg>
<div style="left:502px;top:6px;width:109px;height:25px;background:#fff;border:1px solid #b8c6cd;border-radius:3px;box-sizing:border-box"></div>
<div class="t" style="left:507px;top:11px;font-style:italic;color:#8a9298">Cercare...</div>
<svg width="16" height="16" style="left:593px;top:11px;transform:scaleX(-1)"><use href="#mag"/></svg>
<div class="dv" style="left:616px;top:1px;height:35px"></div>

<div style="left:649px;top:7px;width:26px;height:26px;background:#8ea7b3;border:1px solid #7d95a1;border-radius:3px;box-sizing:border-box"></div>
<div style="left:779px;top:7px;width:26px;height:26px;background:#8ea7b3;border:1px solid #7d95a1;border-radius:3px;box-sizing:border-box"></div>
<div style="left:1712px;top:6px;width:26px;height:26px;background:#8ea7b3;border:1px solid #7d95a1;border-radius:3px;box-sizing:border-box"></div>

<svg width="1874" height="40" style="left:0;top:0" font-family="Liberation Sans">
<use href="#pen" x="625" y="7" width="24" height="24"/>
<use href="#cur" x="650" y="8" width="24" height="24"/>
<use href="#mag" x="678" y="9" width="21" height="21"/>
<use href="#rul" x="702" y="8" width="22" height="22"/>
<use href="#bel" x="728" y="8" width="22" height="22"/>
<use href="#ia1" x="753" y="8" width="24" height="24"/>
<text x="770.500" y="25.500" font-size="6.500" fill="#fff" text-anchor="middle" font-weight="bold">IA</text>
<use href="#ia2" x="780" y="8" width="24" height="24"/>
<text x="797.500" y="25.500" font-size="6.500" fill="#fff" text-anchor="middle" font-weight="bold">IA</text>
<use href="#lin" x="807" y="8" width="24" height="24"/>
<use href="#hln" x="832" y="11" width="24" height="24"/>
<use href="#vln" x="858" y="9" width="24" height="24"/>
<use href="#chA" x="885" y="9" width="24" height="24"/>
<use href="#chB" x="910" y="9" width="24" height="24"/>
<use href="#chC" x="936" y="8" width="24" height="24"/>
<use href="#fib" x="965" y="9" width="22" height="22"/>
<text x="979" y="34" font-size="11" font-weight="bold" fill="#0000d0">F</text>
<use href="#arc" x="988" y="10" width="22" height="22"/>
<text x="1006" y="34" font-size="11" font-weight="bold" fill="#0000d0">F</text>
<use href="#mov" x="1015" y="9" width="22" height="22"/>
<use href="#cop" x="1041" y="9" width="22" height="22"/>
<use href="#tls" x="1067" y="8" width="22" height="22"/>
<use href="#trs" x="1093" y="8" width="22" height="22"/>
<use href="#nte" x="1119" y="8" width="22" height="22"/>
<text x="1130" y="24" font-size="13" font-weight="bold" fill="#111" text-anchor="middle" font-family="Liberation Serif">T</text>
<use href="#arw" x="1145" y="8" width="22" height="22"/>
<use href="#up" x="1171" y="9" width="22" height="22"/>
<use href="#dn" x="1197" y="9" width="22" height="22"/>
<use href="#rct" x="1224" y="9" width="22" height="22"/>
<use href="#ell" x="1250" y="9" width="22" height="22"/>
<use href="#tri" x="1274" y="8" width="22" height="22"/>
<use href="#sln" x="1303" y="8" width="22" height="22"/>
<use href="#thk" x="1326" y="8" width="24" height="24"/>
<use href="#vln" x="1352" y="8" width="24" height="24"/>
<use href="#vbl" x="1380" y="8" width="24" height="24"/>

<circle cx="1416.500" cy="20" r="8" fill="#ffff00" stroke="#a8a820" stroke-width=".7"/><path d="M1419 27l3 3 0-5z" fill="#ffff00" stroke="#a8a820" stroke-width=".5"/>
<text x="1416.500" y="25" font-size="13" font-weight="bold" text-anchor="middle" fill="#111" font-family="Liberation Serif">T</text>
<rect x="1434.500" y="12.500" width="15" height="16" fill="#c4cc70" stroke="#6ba0c0"/><text x="1442" y="25" font-size="13" font-weight="bold" text-anchor="middle" fill="#111" font-family="Liberation Serif">T</text>
<rect x="1460.500" y="12.500" width="15" height="16" fill="#70dc90" stroke="#6ba0c0"/><text x="1468" y="25" font-size="13" font-weight="bold" text-anchor="middle" fill="#111" font-family="Liberation Serif">T</text>
<rect x="1486.500" y="12.500" width="15" height="16" fill="#b0c8f8" stroke="#6b90d0"/><text x="1494" y="25" font-size="13" font-weight="bold" text-anchor="middle" fill="#111" font-family="Liberation Serif">T</text>
<rect x="1512.500" y="12.500" width="15" height="16" fill="#ffff00" stroke="#6ba0c0"/><text x="1520" y="25" font-size="13" font-weight="bold" text-anchor="middle" fill="#111" font-family="Liberation Serif">T</text>
<circle cx="1546" cy="20" r="8" fill="#60ea90" stroke="#68a8b0" stroke-width=".7"/><path d="M1549 27l3 3 0-5z" fill="#60ea90"/>
<text x="1546" y="25" font-size="13" font-weight="bold" text-anchor="middle" fill="#1030a8" font-family="Liberation Serif">T</text>
<circle cx="1571.500" cy="20" r="8" fill="#f8a850" stroke="#b09070" stroke-width=".7"/><path d="M1575 27l3 3 0-5z" fill="#f8a850"/>
<text x="1571.500" y="25" font-size="13" font-weight="bold" text-anchor="middle" fill="#e01800" font-family="Liberation Serif">T</text>
<use href="#sv" x="1595" y="10" width="16" height="16"/>
<path d="M1688 12v15" stroke="#e8e8c8" stroke-width="1.500"/><path d="M1689 12c4-1 8 2 13 0v10c-5 2-9-1-13 0z" fill="#f4c828"/>
<circle cx="1725" cy="19" r="11.500" fill="#2f66c8"/><path d="M1720 16.500h3l4-3.500v12l-4-3.500h-3z" fill="#fff"/><path d="M1729 16c1 2 1 4 0 6M1731.500 14.500c1.500 3 1.500 6 0 9" stroke="#cfe" fill="none"/>
<path d="M1750 11v8" stroke="#e02020" stroke-width="2.400"/><path d="M1746 17h8l-4 5z" fill="#e02020"/>
<path d="M1757 18v-5c0-4 7-4 7 0v6" fill="none" stroke="#d8e0e4" stroke-width="1.500"/><rect x="1754" y="18" width="10" height="9" rx="1" fill="#f0c030" stroke="#a08020" stroke-width=".5"/><circle cx="1759" cy="22" r="1.300" fill="#333"/>
<path d="M1765 30v-6" stroke="#20a030" stroke-width="2.400"/><path d="M1761 25h8l-4-5z" fill="#20a030"/>
<rect x="1780" y="11" width="14" height="18" fill="#c4dcf0" stroke="#7896a8" transform="rotate(-8 1787 20)"/>
<path d="M1792 13c-6-3-13 0-13 8M1781 28c6 3 13 0 13-8" fill="none" stroke="#4c6270" stroke-width="2"/><path d="M1775 20h7l-3.500 5zM1790 22h7l-3.500-5z" fill="#4c6270"/>
<rect x="1811" y="12" width="14" height="5" fill="#222"/><rect x="1811" y="18" width="14" height="4.500" fill="#222"/><rect x="1811" y="23.500" width="14" height="4.500" fill="#6898c8" stroke="#222" stroke-width=".5"/><path d="M1813 14.500h10M1813 20h10M1813 25.500h10" stroke="#ddd" stroke-width=".8" stroke-dasharray="2 1"/>
<rect x="1837.500" y="9.500" width="10" height="10" fill="none" stroke="#7d8f98" stroke-dasharray="2 1"/><path d="M1840 17l5-5" stroke="#7d8f98" stroke-width="1.500"/>
<rect x="1853.500" y="9.500" width="11" height="5" fill="#fff" stroke="#000"/><path d="M1859 22v-5M1856 19l3-3 3 3" stroke="#000" fill="none"/>
<path d="M1869 17h5M1871.500 14.500v5" stroke="#667" stroke-width="1.200"/>
<text x="1859" y="33" font-size="10" fill="#66808c">sab</text>
</svg>
<div class="t" style="left:1623px;top:12px;font-size:11px">misto13</div>
<svg width="8" height="5" style="left:1665px;top:18px"><use href="#cv"/></svg>

<!-- SECOND BAR -->
<div style="left:0;top:38px;width:1874px;height:27px;background:linear-gradient(#afd2fb,#93b8e8);border-bottom:2px solid #6c8ab0;box-sizing:border-box"></div>
<svg width="16" height="16" style="left:6px;top:43px;color:#1a66c0"><use href="#cdl"/></svg>
<div class="dv" style="left:25px;top:38px;height:26px"></div>
<svg width="12" height="22" style="left:29px;top:40px"><use href="#lk"/></svg>
<div class="dv" style="left:43px;top:38px;height:26px"></div>
<div class="t b" style="left:48px;top:44px;font-size:10.5px">CRWD</div>
<svg width="8" height="5" style="left:84px;top:49px"><use href="#cv"/></svg>
<div class="dv" style="left:98px;top:38px;height:26px"></div>
<div class="t b" style="left:104px;top:44px;font-size:11.2px">1 giorno</div>
<svg width="8" height="5" style="left:153px;top:49px"><use href="#cv"/></svg>
<div class="dv" style="left:165px;top:38px;height:26px"></div>
<div class="t b" style="left:171px;top:44px;font-size:11.2px">6 mesi</div>
<svg width="8" height="5" style="left:213px;top:49px"><use href="#cv"/></svg>
<div class="dv" style="left:224px;top:38px;height:26px"></div>
<svg width="20" height="20" style="left:230px;top:42px"><use href="#ind"/></svg>
<div class="t b" style="left:255px;top:43px;font-size:11.200px">Indicatori</div>
<div class="dv" style="left:310px;top:38px;height:26px"></div>
<svg width="8" height="5" style="left:313px;top:49px"><use href="#cv"/></svg>
<div class="dv" style="left:324px;top:38px;height:26px"></div>
<div style="left:333px;top:46px;width:10px;height:12px;background:#e8eef2;border:1px solid #b8c4cc;box-sizing:border-box"></div>
<div class="t b" style="left:333px;top:45px;width:10px;text-align:center;font-size:10px;color:#667;font-family:'Liberation Serif',serif">i</div>
<div class="t" style="left:352px;top:44px;font-size:10px">CROWDSTRIKE HOLDINGS INC.</div>
<div class="t b" style="left:507px;top:44px;font-size:10.500px;color:#1f8a3a">455,59</div>
<div style="left:544px;top:43px;width:43px;height:16px;background:#4ed05a;border:1px solid #3ab048;border-radius:3px;box-sizing:border-box"></div>
<div class="t" style="left:544px;top:44px;width:43px;text-align:center;font-size:10.500px;color:#fff">+2,59%</div>
<div class="t b" style="left:591px;top:44px;font-size:10.500px">23 mag 2025</div>
<div style="left:662px;top:46px;width:9px;height:9px;border:1px solid #77838c;border-radius:50%;background:#c8d4dc;box-sizing:border-box"></div>
<div class="dv" style="left:1840px;top:38px;height:26px"></div>
<svg width="20" height="20" viewBox="0 0 20 20" style="left:1842px;top:42px"><path d="M9 2C4 2 2 6 3 11" fill="none" stroke="#e04848" stroke-width="2"/><path d="M0 10h7l-3.500 5z" fill="#e04848"/><path d="M10 18c5 0 7-3 7-8" fill="none" stroke="#20a030" stroke-width="2"/><path d="M13 11h8l-4-6z" fill="#20a030"/></svg>
<div class="dv" style="left:1865px;top:38px;height:26px"></div>
<div style="left:1869px;top:52px;width:5px;height:2px;background:#445"></div>

<!-- LEGEND ROW -->
<div style="left:0;top:65px;width:33px;height:12px;background:#9cb7c3;border-bottom:1px solid #7d98a4"></div>
<svg width="8" height="5" style="left:12px;top:68px;transform:scaleY(-1);opacity:.5"><use href="#cv"/></svg>
<div class="tab" style="left:34px;width:13px"></div>
<svg width="10" height="11" viewBox="0 0 24 24" style="left:36px;top:68px"><use href="#dn"/></svg>
<div class="tab" style="left:50px;width:14px"></div>
<svg width="10" height="11" viewBox="0 0 24 24" style="left:52px;top:68px"><use href="#up"/></svg>
<div class="tab" style="left:66px;width:75px"></div>
<div style="left:70px;top:69px;width:5px;height:11px;background:#d87060"></div><div style="left:75px;top:69px;width:5px;height:11px;background:#58c060"></div>
<div class="t" style="left:84px;top:67px">Heikin-Ashi</div>
<div class="tab" style="left:141px;width:20px"></div>
<svg width="12" height="10" style="left:145px;top:69px"><path d="M0 1h2M4 1h8M0 5h2M4 5h8M0 9h2M4 9h8" stroke="#111" stroke-width="1.500"/></svg>
<div class="tab" style="left:160px;width:165px"></div>
<div style="left:163px;top:69px;width:10px;height:11px;background:#0a80d8"></div>
<div class="t" style="left:177px;top:67px">Multiple Smoothing MA (14,10)</div>
<div class="tab" style="left:325px;width:66px"></div>
<div style="left:328px;top:69px;width:5px;height:11px;background:#0000d0"></div><div style="left:333px;top:69px;width:5px;height:11px;background:#e80020"></div>
<div class="t" style="left:342px;top:67px">EMA (87)</div>
<div class="tab" style="left:390px;width:93px"></div>
<div style="left:393px;top:69px;width:5px;height:11px;background:#9999ff"></div><div style="left:398px;top:69px;width:5px;height:11px;background:#ff0033"></div>
<div class="t" style="left:407px;top:67px">Bollinger (20 2)</div>

<!-- LEFT TOOLBAR -->
<div style="left:0;top:77px;width:33px;height:793px;background:#9cb7c3;border-left:1px solid #6f8a98;border-right:1px solid #7d98a4;box-sizing:border-box"></div>
<div style="left:3px;top:105px;width:26px;height:26px;background:#8ea7b3;border:1px solid #7d95a1;border-radius:3px;box-sizing:border-box"></div>
<div style="left:3px;top:235px;width:26px;height:26px;background:#8ea7b3;border:1px solid #7d95a1;border-radius:3px;box-sizing:border-box"></div>
<svg width="33" height="870" style="left:0;top:0" font-family="Liberation Sans">
<use href="#pen" x="4" y="80" width="24" height="24"/>
<use href="#cur" x="4" y="106" width="24" height="24"/>
<use href="#mag" x="6" y="133" width="21" height="21"/>
<use href="#rul" x="5" y="159" width="22" height="22"/>
<use href="#bel" x="5" y="185" width="22" height="22"/>
<use href="#ia1" x="4" y="210" width="24" height="24"/>
<text x="21.500" y="231" font-size="6.500" fill="#fff" text-anchor="middle" font-weight="bold">IA</text>
<use href="#ia2" x="4" y="236" width="24" height="24"/>
<text x="21.500" y="257" font-size="6.500" fill="#fff" text-anchor="middle" font-weight="bold">IA</text>
<use href="#lin" x="4" y="262" width="24" height="24"/>
<use href="#hln" x="4" y="288" width="24" height="24"/>
<use href="#vln" x="4.500" y="314" width="24" height="24"/>
<use href="#chA" x="4" y="341" width="24" height="24"/>
<use href="#chB" x="4" y="366" width="24" height="24"/>
<use href="#chC" x="4" y="393" width="24" height="24"/>
<use href="#fib" x="6" y="421" width="22" height="22"/>
<text x="21" y="445" font-size="11" font-weight="bold" fill="#0000d0">F</text>
<use href="#arc" x="4" y="446" width="22" height="22"/>
<text x="21" y="470" font-size="11" font-weight="bold" fill="#0000d0">F</text>
<use href="#mov" x="5" y="471" width="22" height="22"/>
<use href="#cop" x="5" y="497" width="22" height="22"/>
<use href="#tls" x="5" y="522" width="22" height="22"/>
<use href="#trs" x="5" y="549" width="22" height="22"/>
<use href="#nte" x="5" y="575" width="22" height="22"/>
<text x="16" y="591" font-size="13" font-weight="bold" fill="#111" text-anchor="middle" font-family="Liberation Serif">T</text>
<use href="#arw" x="5" y="601" width="22" height="22"/>
<use href="#up" x="5" y="627" width="22" height="22"/>
<use href="#dn" x="5" y="653" width="22" height="22"/>
<use href="#rct" x="5" y="679" width="22" height="22"/>
<use href="#ell" x="5" y="705" width="22" height="22"/>
<use href="#tri" x="5" y="731" width="22" height="22"/>
<use href="#sln" x="5" y="755" width="22" height="22"/>
<use href="#thk" x="4" y="781" width="24" height="24"/>
<use href="#vln" x="4.500" y="808" width="24" height="24"/>
<use href="#vbl" x="6" y="834" width="24" height="24"/>
<circle cx="16" cy="873" r="8" fill="#ffff00" stroke="#a8a820"/>
<text x="16" y="875" font-size="13" font-weight="bold" fill="#111" text-anchor="middle" font-family="Liberation Serif">T</text>
</svg>

<!-- DIALOG -->
<div style="left:58px;top:84px;width:845px;height:584px;background:#cddbe3;border:1px solid #4f6a78;box-sizing:border-box"></div>
<div style="left:59px;top:85px;width:843px;height:25px;background:linear-gradient(#bcd6e2,#8fb0bd);border-bottom:1px solid #4f6a78"></div>
<svg width="14" height="14" style="left:64px;top:91px;color:#2f78c0"><use href="#cdl"/></svg>
<div class="t" style="left:83px;top:90px;font-size:10.500px;letter-spacing:-.08px">Impostazioni grafico - CROWDSTRIKE HOLDINGS INC. Giornaliero</div>
<div class="t" style="left:725px;top:90px;font-size:10.900px">Modalità di visualizzazione</div>
<svg width="20" height="20" viewBox="0 0 20 20" style="left:859px;top:86px"><rect x="3" y="6" width="16" height="13" fill="#fff" stroke="#2a5ab0"/><rect x="3" y="6" width="16" height="3" fill="#2a5ab0"/><ellipse cx="7" cy="6" rx="7" ry="4.500" fill="#fff" stroke="#222"/><circle cx="7" cy="6" r="2.300" fill="#222"/><path d="M12 17h6l-3 3z" fill="#000"/></svg>
<svg width="12" height="12" style="left:885px;top:92px"><path d="M1 1l10 10M11 1L1 11" stroke="#8d9ea8" stroke-width="2.200"/></svg>

<div style="left:59px;top:110px;width:250px;height:557px;background:#9cb8c5;border-right:1px solid #87a2ae;box-sizing:border-box"></div>
<div style="left:69px;top:121px;width:229px;height:49px;background:#cddbe3;border:1px solid #7f99a5;box-sizing:border-box"></div>
<div class="t b" style="left:81px;top:128px;font-size:11.500px;border-bottom:1px dotted #222;line-height:13px">Modelli di grafico</div>
<svg width="14" height="14" viewBox="0 0 14 14" style="left:180px;top:127px"><path d="M1 13l6-6c-1-3 1-6 5-5L9 5l1 2 3-2c0 4-3 5-5 4l-4 5z" fill="#fff" stroke="#222"/></svg>
<div class="sel" style="left:80px;top:147px;width:85px;height:17px">Senza nome*</div>
<svg width="8" height="5" style="left:154px;top:153px"><use href="#cv"/></svg>
<svg width="15" height="15" style="left:172px;top:148px"><use href="#sv"/></svg>
<svg width="15" height="15" style="left:193px;top:148px"><use href="#pls"/></svg>

<div style="left:69px;top:181px;width:114px;height:26px;background:linear-gradient(#5c90d8,#3d72c0);border-radius:4px 0 0 0"></div>
<div style="left:183px;top:181px;width:115px;height:26px;background:linear-gradient(#fff,#e0e6ea);border-radius:0 4px 0 0;border-bottom:1px solid #9aa8b0;box-sizing:border-box"></div>
<svg width="17" height="15" style="left:96px;top:186px"><rect x=".5" y=".5" width="16" height="13" fill="#8fb4e6" stroke="#cfe0f4"/><path d="M2 11l4-5 3 3 5-6" fill="none" stroke="#fff"/></svg>
<div class="t" style="left:116px;top:187px;color:#d8e6f6;font-size:10.500px">Indicatori</div>
<svg width="18" height="16" viewBox="0 0 18 16" style="left:213px;top:186px"><rect x="1" y="6" width="4" height="7" fill="#d87060" stroke="#733"/><rect x="12" y="1" width="4" height="9" fill="#58c060" stroke="#274"/><path d="M3 14l7-7c-1-3 1-5 4-4l-2 2 1 2 2-1c0 3-2 4-4 3l-6 6z" fill="#fff" stroke="#222"/></svg>
<div class="t" style="left:233px;top:187px;font-size:10.500px">Grafico</div>

<div style="left:69px;top:207px;width:229px;height:420px;background:#fff"></div>
<svg width="80" height="70" style="left:70px;top:208px"><path d="M15 8.500h9M33.500 14V59.500H49M38 25.500h10M38 42.500h10" stroke="#8a9aa2" fill="none"/></svg>
<div style="left:77px;top:211px;width:9px;height:9px;background:#fff;border:1px solid #667;box-sizing:border-box"></div>
<div style="left:79px;top:215px;width:5px;height:1px;background:#000"></div>
<div style="left:95px;top:211px;width:5px;height:11px;background:#d87060"></div><div style="left:100px;top:211px;width:5px;height:11px;background:#58c060"></div>
<div class="t b" style="left:109px;top:209px;font-size:11px">Heikin-Ashi</div>
<div style="left:99px;top:228px;width:9px;height:9px;background:#fff;border:1px solid #667;box-sizing:border-box"></div>
<div style="left:101px;top:232px;width:5px;height:1px;background:#000"></div><div style="left:103px;top:230px;width:1px;height:5px;background:#000"></div>
<div style="left:117px;top:228px;width:10px;height:10px;background:#0a80d8"></div>
<div class="t" style="left:131px;top:226px">Multiple Smoothing MA (14,10)</div>
<div style="left:117px;top:245px;width:5px;height:10px;background:#0000d0"></div><div style="left:122px;top:245px;width:5px;height:10px;background:#e80020"></div>
<div class="t" style="left:131px;top:243px">EMA (87)</div>
<div style="left:117px;top:262px;width:5px;height:10px;background:#9999ff"></div><div style="left:122px;top:262px;width:5px;height:10px;background:#ff0033"></div>
<div style="left:128px;top:259px;width:79px;height:16px;background:#2f5fb0;border-radius:3px"></div>
<div class="t" style="left:131px;top:260px;color:#fff">Bollinger (20 2)</div>

<div style="left:69px;top:627px;width:229px;height:29px;background:#cddbe3;border:1px solid #7f99a5;box-sizing:border-box"></div>
<svg width="20" height="20" style="left:75px;top:632px"><use href="#ind"/></svg>
<div class="t" style="left:99px;top:635px;font-size:10.700px">Aggiungi Indicatore</div>
<div style="left:201px;top:632px;width:1px;height:19px;background:#8a9ea8"></div>
<svg width="24" height="24" style="left:242px;top:630px"><use href="#cop"/></svg>
<svg width="20" height="20" style="left:273px;top:632px"><use href="#trs"/></svg>

<!-- right pane -->
<div style="left:329px;top:131px;width:23px;height:12px;border-radius:6px;background:#3465b5"></div>
<div style="left:340px;top:133px;width:8px;height:8px;border-radius:50%;background:#fff"></div>
<div class="t" style="left:358px;top:129px;font-size:16.200px;line-height:18px;color:#1e2a30">Bande di Bollinger</div>
<svg width="13" height="13" style="left:496px;top:132px"><use href="#bub"/></svg>
<div class="t b" style="left:661px;top:129px;font-size:11.500px">Configurazione:</div>
<div class="sel" style="left:753px;top:128px;width:85px;height:18px">Senza nome*</div>
<svg width="8" height="5" style="left:827px;top:135px"><use href="#cv"/></svg>
<svg width="14" height="15" style="left:845px;top:129px;opacity:.3"><use href="#sv"/></svg>
<svg width="15" height="15" style="left:865px;top:129px"><use href="#pls"/></svg>

<div style="left:309px;top:196px;width:593px;height:1px;background:#7f99a5"></div>
<div style="left:329px;top:164px;width:161px;height:33px;background:linear-gradient(#f2f6f8,#d5e0e6);border:1px solid #9ab0bc;border-top:2px solid #3e6fa8;border-bottom:none;box-sizing:border-box"></div>
<svg width="12" height="6" style="left:404px;top:166px"><path d="M0 0h10l-5 5z" fill="#3e6fa8"/></svg>
<div style="left:490px;top:164px;width:203px;height:32px;background:#9cb8c5;border:1px solid #7f99a5;border-bottom:none;border-radius:3px 3px 0 0;box-sizing:border-box"></div>
<div style="left:693px;top:164px;width:189px;height:32px;background:#9cb8c5;border:1px solid #7f99a5;border-bottom:none;border-radius:3px 3px 0 0;box-sizing:border-box"></div>
<div class="t b c" style="left:329px;top:175px;width:161px;font-size:11px">Parametri</div>
<div class="t b c" style="left:490px;top:175px;width:203px;font-size:11px">Zone di colore (1)</div>
<div class="t b c" style="left:693px;top:175px;width:189px;font-size:11px">Scala (Lineare)</div>

<div class="t" style="left:350px;top:221px">Nb Periodo MM</div>
<div style="left:431px;top:218px;width:93px;height:21px;background:#fff;border:1px solid #8a9ba5;border-radius:3px;box-sizing:border-box"></div>
<div class="t" style="right:1370px;top:222px;font-size:11px">20</div>
<div style="left:505px;top:218px;width:19px;height:21px;background:#b4c8d2;border:1px solid #8a9ba5;border-radius:0 3px 3px 0;box-sizing:border-box"></div>
<svg width="10" height="17" style="left:510px;top:220px"><path d="M1 5l4-3 4 3M1 12l4 3 4-3" fill="none" stroke="#222" stroke-width="1.400"/></svg>
<div class="t" style="left:587px;top:221px">Nm Scarto Tipo</div>
<div style="left:670px;top:218px;width:93px;height:21px;background:#fff;border:1px solid #8a9ba5;border-radius:3px;box-sizing:border-box"></div>
<div class="t" style="right:1131px;top:222px;font-size:11px">2</div>
<div style="left:744px;top:218px;width:19px;height:21px;background:#b4c8d2;border:1px solid #8a9ba5;border-radius:0 3px 3px 0;box-sizing:border-box"></div>
<svg width="10" height="17" style="left:749px;top:220px"><path d="M1 5l4-3 4 3M1 12l4 3 4-3" fill="none" stroke="#222" stroke-width="1.400"/></svg>

<div class="t" style="left:368px;top:253px">Metodo</div>
<div style="left:431px;top:250px;width:135px;height:21px;background:#fff;border:1px solid #8a9ba5;border-radius:3px;box-sizing:border-box"></div>
<div class="t" style="left:436px;top:254px">Semplice</div>
<div style="left:551px;top:250px;width:15px;height:21px;background:#b4c8d2;border:1px solid #8a9ba5;border-radius:0 3px 3px 0;box-sizing:border-box"></div>
<svg width="8" height="5" style="left:554px;top:258px"><use href="#cv"/></svg>
<div class="t" style="left:601px;top:253px;font-size:10.800px">Applica a</div>
<div style="left:670px;top:250px;width:138px;height:21px;background:#fff;border:1px solid #8a9ba5;border-radius:3px;box-sizing:border-box"></div>
<div class="t" style="left:675px;top:254px">Chiusura</div>
<div style="left:793px;top:250px;width:15px;height:21px;background:#b4c8d2;border:1px solid #8a9ba5;border-radius:0 3px 3px 0;box-sizing:border-box"></div>
<svg width="8" height="5" style="left:796px;top:258px"><use href="#cv"/></svg>

<div class="t b" style="left:350px;top:281px;font-size:11px">Periodo</div>
<svg width="13" height="13" style="left:396px;top:281px"><use href="#bub"/></svg>
<div style="left:351px;top:303px;width:11px;height:11px;border-radius:50%;background:#fff;border:1px solid #7d8d96;box-sizing:border-box"></div>
<div style="left:354px;top:306px;width:5px;height:5px;border-radius:50%;background:#222"></div>
<div class="t" style="left:367px;top:302px;font-size:10.800px">Usa il periodo del grafico</div>
<div style="left:351px;top:324px;width:11px;height:11px;border-radius:50%;background:#fff;border:1px solid #7d8d96;box-sizing:border-box"></div>
<div class="t" style="left:367px;top:323px;font-size:10.800px">Usa un altro periodo :</div>
<div class="sel b" style="left:475px;top:322px;width:67px;height:17px;font-size:11px">1 giorno</div>
<svg width="8" height="5" style="left:531px;top:328px"><use href="#cv"/></svg>

<!-- table -->
<div style="left:329px;top:359px;width:481px;height:144px;border:1px solid #7a96a3;box-sizing:border-box"></div>
<div style="left:330px;top:360px;width:479px;height:25px;background:#9cb8c5;border-bottom:1px solid #7a96a3"></div>
<div style="left:398px;top:360px;width:1px;height:142px;background:#7a96a3"></div>
<div style="left:565px;top:360px;width:1px;height:142px;background:#7a96a3"></div>
<div style="left:639px;top:360px;width:1px;height:142px;background:#7a96a3"></div>
<div style="left:702px;top:360px;width:1px;height:142px;background:#7a96a3"></div>
<div class="t b c" style="left:330px;top:365px;width:68px;font-size:10.800px">Linea</div>
<div class="t b c" style="left:399px;top:365px;width:166px;font-size:10.800px">Colore</div>
<div class="t b c" style="left:566px;top:365px;width:73px;font-size:10.800px">Spessore</div>
<div class="t b c" style="left:640px;top:365px;width:62px;font-size:10.800px">Stile</div>
<div class="t b c" style="left:703px;top:365px;width:106px;font-size:10.800px">Etichetta</div>

<div class="cb" style="left:343px;top:403px"></div><svg width="10" height="10" style="left:344px;top:404px"><path d="M1 5l3 3 5-7" fill="none" stroke="#111" stroke-width="2"/></svg>
<div class="t" style="left:359px;top:402px">Boll+</div>
<div class="sw" style="left:408px;top:400px"></div><div class="t" style="left:428px;top:400px">Rialzo</div>
<div style="left:460px;top:408px;width:34px;height:1px;background:#6f8a98"></div>
<div class="lnk" style="left:468px;top:395px"></div><svg width="10" height="20" style="left:472px;top:398px"><use href="#lk"/></svg>
<div class="sw" style="left:496px;top:400px"></div><div class="t" style="left:516px;top:400px">Ribasso</div>
<div class="sl" style="left:580px;top:400px;width:43px"></div><svg width="31" height="10" viewBox="0 0 26 10" style="left:586px;top:404px"><use href="#spx"/></svg>
<div class="sl" style="left:649px;top:400px;width:43px"></div><svg width="31" height="10" viewBox="0 0 26 10" style="left:655px;top:404px"><use href="#spx"/></svg>
<div class="cb" style="left:716px;top:403px"></div>
<div class="sel" style="left:732px;top:400px;width:68px;height:17px;color:#8d9aa2;background:transparent;border-color:#9aaab2">Misura +0</div><svg width="8" height="5" style="left:789px;top:406px;opacity:.45"><use href="#cv"/></svg>

<div class="cb" style="left:343px;top:439px"></div><svg width="10" height="10" style="left:344px;top:440px"><path d="M1 5l3 3 5-7" fill="none" stroke="#111" stroke-width="2"/></svg>
<div class="t" style="left:359px;top:438px">BollM</div>
<div class="sw sr" style="left:408px;top:436px"></div><div class="t" style="left:428px;top:436px">Rialzo</div>
<div style="left:460px;top:444px;width:34px;height:1px;background:#6f8a98"></div>
<div class="lnk" style="left:468px;top:431px"></div><svg width="10" height="20" style="left:472px;top:434px"><use href="#lk"/></svg>
<div class="sw sr" style="left:496px;top:436px"></div><div class="t" style="left:516px;top:436px">Ribasso</div>
<div class="sl" style="left:580px;top:436px;width:43px"></div><svg width="31" height="10" viewBox="0 0 26 10" style="left:586px;top:440px"><use href="#spx"/></svg>
<div class="sl" style="left:649px;top:436px;width:43px"></div><svg width="31" height="10" viewBox="0 0 26 10" style="left:655px;top:440px"><use href="#spd"/></svg>
<div class="cb" style="left:716px;top:439px"></div>
<div class="sel" style="left:732px;top:436px;width:68px;height:17px;color:#8d9aa2;background:transparent;border-color:#9aaab2">Misura +0</div><svg width="8" height="5" style="left:789px;top:442px;opacity:.45"><use href="#cv"/></svg>

<div class="cb" style="left:343px;top:475px"></div><svg width="10" height="10" style="left:344px;top:476px"><path d="M1 5l3 3 5-7" fill="none" stroke="#111" stroke-width="2"/></svg>
<div class="t" style="left:359px;top:474px">Boll-</div>
<div class="sw" style="left:408px;top:472px"></div><div class="t" style="left:428px;top:472px">Rialzo</div>
<div style="left:460px;top:480px;width:34px;height:1px;background:#6f8a98"></div>
<div class="lnk" style="left:468px;top:467px"></div><svg width="10" height="20" style="left:472px;top:470px"><use href="#lk"/></svg>
<div class="sw" style="left:496px;top:472px"></div><div class="t" style="left:516px;top:472px">Ribasso</div>
<div class="sl" style="left:580px;top:472px;width:43px"></div><svg width="31" height="10" viewBox="0 0 26 10" style="left:586px;top:476px"><use href="#spx"/></svg>
<div class="sl" style="left:649px;top:472px;width:43px"></div><svg width="31" height="10" viewBox="0 0 26 10" style="left:655px;top:476px"><use href="#spx"/></svg>
<div class="cb" style="left:716px;top:475px"></div>
<div class="sel" style="left:732px;top:472px;width:68px;height:17px;color:#8d9aa2;background:transparent;border-color:#9aaab2">Misura +0</div><svg width="8" height="5" style="left:789px;top:478px;opacity:.45"><use href="#cv"/></svg>

</body></html>
